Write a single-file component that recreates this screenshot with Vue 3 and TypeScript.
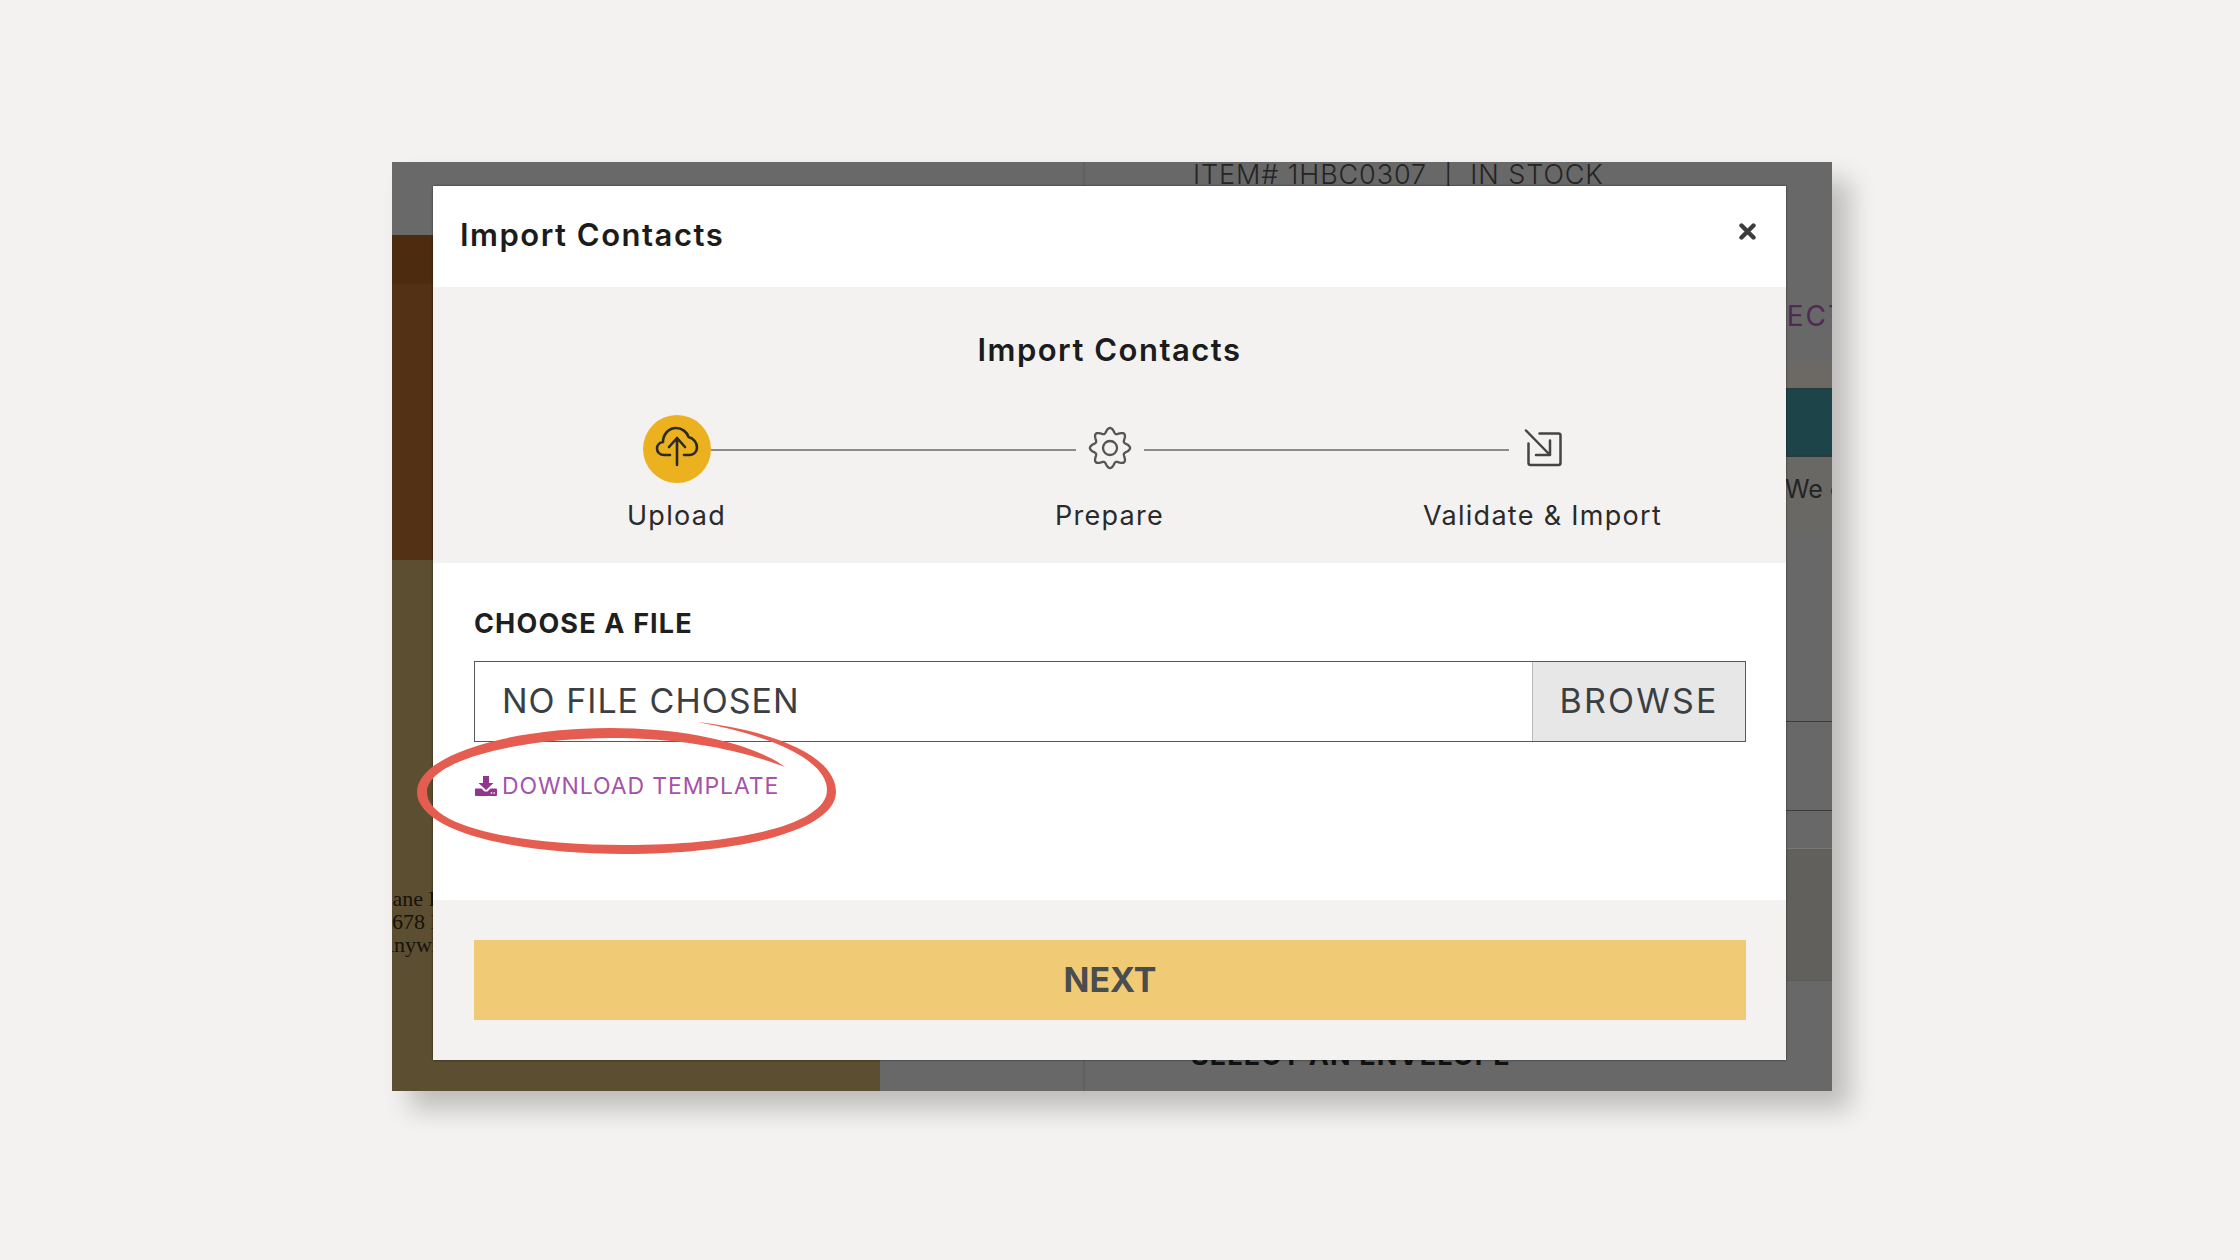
<template>
  <div class="page">
    <div class="stage">
      <div class="bg-left">
        <div class="bl-gray" />
        <div class="bl-dark" />
        <div class="bl-brown" />
        <div class="bl-olive">
          <span class="addr addr-a">Jane Doe</span>
          <span class="addr addr-b">5678 Main St</span>
          <span class="addr addr-c">Anywhere</span>
        </div>
      </div>
      <div class="bg-mid" />
      <div class="bg-right">
        <div class="br-top">
          <div class="item-line">ITEM# 1HBC0307 &nbsp;|&nbsp; IN STOCK</div>
          <div class="select-line">SELECT</div>
        </div>
        <div class="br-tint" />
        <div class="br-teal" />
        <div class="br-note">We can</div>
        <div class="br-plain" />
        <div class="br-line" />
        <div class="br-line br-short" />
        <div class="br-shade" />
        <div class="br-end">SELECT AN ENVELOPE</div>
      </div>

      <div class="modal">
        <header class="modal-head">
          <h2 class="modal-title">Import Contacts</h2>
          <svg class="close" width="17" height="17" viewBox="0 0 17 17">
            <path d="M2.5 2.5l12 12M14.5 2.5l-12 12" fill="none" stroke="#3d3d3d" stroke-width="4.4" stroke-linecap="round" />
          </svg>
        </header>

        <section class="steps">
          <h3 class="steps-title">Import Contacts</h3>
          <div class="track">
            <span class="step-icon is-active">
              <svg width="68" height="68" viewBox="0 0 68 68" fill="none" stroke="#2b2a25" stroke-width="2.6" stroke-linecap="round" stroke-linejoin="round">
                <path d="M27 40h-6c-4 0-7-2.900-7-6.500 0-3.400 2.500-6 6-6.500 0-8 6-14 13-14 6 0 11 4 12.500 9 4.800 1 8.500 5.500 8.500 10.500 0 4.400-3.500 7.500-7 7.500h-6" />
                <path d="M34 50V23M26 32l8-9 8 9" />
              </svg>
            </span>
            <span class="track-line" />
            <span class="step-icon">
              <svg width="68" height="68" viewBox="0 0 68 68" fill="none" stroke="#555" stroke-width="2.3" stroke-linejoin="round">
                <path :d="gearPath" />
                <circle cx="34" cy="33" r="7" />
              </svg>
            </span>
            <span class="track-line" />
            <span class="step-icon">
              <svg width="68" height="68" viewBox="0 0 68 68" fill="none" stroke="#444" stroke-width="2.500" stroke-linecap="round" stroke-linejoin="round">
                <path d="M30.500 18.500H49.500a2 2 0 0 1 2 2V48a2 2 0 0 1-2 2H21.500a2 2 0 0 1-2-2V28.500" />
                <path d="M17 15.500L41 40M41 25.500V40H27" />
              </svg>
            </span>
          </div>
          <div class="labels">
            <span v-for="step in steps" :key="step" class="label">{{ step }}</span>
          </div>
        </section>

        <section class="file">
          <div class="file-title">CHOOSE A FILE</div>
          <div class="file-box">
            <span class="file-name">NO FILE CHOSEN</span>
            <span class="file-browse">BROWSE</span>
          </div>
          <a class="template">
            <svg width="22" height="20" viewBox="0 0 22 20">
              <path d="M8 0h6v7h4.500L11 14 3.500 7H8z" fill="#93358f" />
              <path d="M0 13.500a1 1 0 0 1 1-1h5.500l3 3h3l3-3H21a1 1 0 0 1 1 1V19a1 1 0 0 1-1 1H1a1 1 0 0 1-1-1z" fill="#93358f" />
              <circle cx="16.500" cy="17" r=".9" fill="#e7cfe6" />
              <circle cx="19.200" cy="17" r=".9" fill="#e7cfe6" />
            </svg>
            <span>DOWNLOAD TEMPLATE</span>
          </a>
        </section>

        <footer class="modal-foot">
          <button type="button" class="next">NEXT</button>
        </footer>
      </div>
    </div>

    <svg class="ring" width="2240" height="1260" viewBox="0 0 2240 1260">
      <path
        fill="#e55c50"
        d="M697 722C770 730 836 755 836 792C836 830 740 854 625 854C510 854 417 830 417 792C417 755 510 728 610 728C690 728 755 745 785 767C745 752 690 738 612 738C520 738 427 760 427 792C427 825 510 845 625 845C735 845 827 825 827 790C827 760 770 735 697 722Z"
      />
    </svg>
  </div>
</template>

<script setup lang="ts">
const steps = ['Upload', 'Prepare', 'Validate & Import']

// gear outline: a wavy circle with 8 teeth, one pointing straight up
const buildGear = (cx: number, cy: number) => {
  const pts: string[] = []
  for (let i = 0; i < 128; i++) {
    const a = (i / 128) * Math.PI * 2
    const r = 17.6 + 2.5 * Math.cos(8 * a)
    const x = cx + r * Math.sin(a)
    const y = cy - r * Math.cos(a)
    pts.push(`${x.toFixed(2)} ${y.toFixed(2)}`)
  }
  return `M${pts.join('L')}Z`
}

const gearPath = buildGear(34, 33)
</script>

<style>
html,
body {
  margin: 0;
  background: #f3f2f0;
}
</style>

<style scoped>
.page {
  position: relative;
  box-sizing: border-box;
  width: 2240px;
  height: 1260px;
  padding: 162px 0 0 392px;
  background: #f3f2f0;
  overflow: hidden;
  font-family: Inter, "Liberation Sans", sans-serif;
}

.stage {
  position: relative;
  display: flex;
  width: 1440px;
  height: 929px;
  overflow: visible;
  background: #686868;
  box-shadow: 18px 18px 24px rgba(0, 0, 0, 0.22);
}

.bg-left {
  width: 488px;
  display: flex;
  flex-direction: column;
  overflow: hidden;
}

.bl-gray {
  height: 73px;
  background: #696969;
}

.bl-dark {
  height: 49px;
  background: #4c2b0e;
}

.bl-brown {
  height: 276px;
  background: #523114;
}

.bl-olive {
  flex: 1;
  display: flex;
  flex-direction: column;
  padding-top: 327px;
  background: #5c4e30;
  font-family: "Liberation Serif", serif;
  font-size: 22px;
  line-height: 23px;
  color: #15120c;
}

.addr-a {
  margin-left: -8px;
}

.addr-b {
  margin-left: -11px;
}

.addr-c {
  margin-left: -14px;
}

.bg-mid {
  width: 205px;
  background: #686868;
  border-right: 2px solid #606060;
  box-sizing: border-box;
}

.bg-right {
  flex: 1;
  min-width: 0;
  display: flex;
  flex-direction: column;
  overflow: hidden;
  color: #242424;
}

.br-top {
  height: 199px;
}

.item-line {
  padding-left: 108px;
  font-size: 27px;
  font-weight: 300;
  line-height: 26px;
  letter-spacing: 0.9px;
  white-space: nowrap;
}

.select-line {
  margin-top: 112px;
  padding-left: 645px;
  font-size: 28px;
  line-height: 32px;
  letter-spacing: 2px;
  color: #4e2a55;
  white-space: nowrap;
}

.br-tint {
  height: 27px;
  background: #6c6965;
}

.br-teal {
  box-sizing: border-box;
  height: 69px;
  background: #1c4449;
  border-top: 2px solid #2d3a3c;
  border-bottom: 2px solid #2d3a3c;
}

.br-note {
  height: 75px;
  padding: 16px 0 0 700px;
  box-sizing: border-box;
  background: #6a6865;
  font-size: 25px;
  line-height: 32px;
  white-space: nowrap;
}

.br-plain {
  height: 189px;
}

.br-line {
  box-sizing: border-box;
  height: 89px;
  border-top: 1px solid #3c3c3c;
}

.br-short {
  height: 38px;
}

.br-shade {
  height: 132px;
  background: #62605c;
  border-top: 1px solid #777;
  box-sizing: border-box;
}

.br-end {
  box-sizing: border-box;
  height: 111px;
  padding: 60px 0 0 106px;
  border-top: 1px solid #5a5a5a;
  font-size: 27px;
  font-weight: 700;
  line-height: 30px;
  letter-spacing: 1.1px;
  color: #111;
  white-space: nowrap;
}

.modal {
  position: absolute;
  left: 41px;
  top: 24px;
  width: 1353px;
  height: 874px;
  display: flex;
  flex-direction: column;
  background: #fff;
  box-shadow: 0 0 2px rgba(0, 0, 0, 0.6);
}

.modal-head {
  height: 101px;
  flex: none;
  box-sizing: border-box;
  display: flex;
  align-items: center;
  justify-content: space-between;
  padding: 0 30px 4px 27px;
}

.modal-title,
.steps-title {
  margin: 0;
  font-size: 31px;
  font-weight: 600;
  line-height: 36px;
  letter-spacing: 1.5px;
  color: #1c1c1c;
}

.close {
  margin-top: -6px;
}

.steps {
  height: 276px;
  flex: none;
  box-sizing: border-box;
  padding-top: 45px;
  background: #f3f2f0;
}

.steps-title {
  text-align: center;
}

.track {
  display: flex;
  align-items: center;
  margin-top: 47px;
  padding: 0 209px 0 210px;
}

.step-icon {
  width: 68px;
  height: 68px;
  flex: none;
  display: flex;
}

.step-icon.is-active {
  border-radius: 50%;
  background: #ebb11f;
}

.track-line {
  flex: 1;
  height: 2px;
  margin-top: 2px;
  background: #8c8b88;
}

.labels {
  display: grid;
  grid-template-columns: repeat(3, 433px);
  margin-top: 17px;
  padding-left: 27px;
}

.label {
  text-align: center;
  font-size: 27px;
  line-height: 32px;
  letter-spacing: 1.3px;
  color: #2a2a2a;
}

.file {
  flex: 1;
  box-sizing: border-box;
  padding: 44px 40px 0 41px;
}

.file-title {
  font-size: 27px;
  font-weight: 700;
  line-height: 34px;
  letter-spacing: 1.15px;
  color: #1f1f1f;
}

.file-box {
  display: flex;
  height: 81px;
  margin-top: 20px;
  box-sizing: border-box;
  border: 1px solid #55585c;
  font-size: 34px;
  letter-spacing: 1px;
  color: #3b3f44;
}

.file-name {
  flex: 1;
  display: flex;
  align-items: center;
  padding: 0 0 3px 27px;
}

.file-browse {
  width: 213px;
  display: flex;
  align-items: center;
  justify-content: center;
  padding-bottom: 3px;
  box-sizing: border-box;
  background: #e7e7e7;
  border-left: 1px solid #b9b9b9;
  letter-spacing: 2.2px;
}

.template {
  display: flex;
  align-items: center;
  gap: 5px;
  margin-top: 32px;
  padding-left: 1px;
  font-size: 23px;
  line-height: 24px;
  letter-spacing: 0.9px;
  color: #a552aa;
}

.modal-foot {
  height: 160px;
  flex: none;
  box-sizing: border-box;
  padding: 40px 40px 40px 41px;
  background: #f3f2f0;
}

.next {
  display: block;
  width: 100%;
  height: 80px;
  padding: 0 0 2px;
  border: 0;
  border-radius: 0;
  background: #f1ca75;
  font-family: inherit;
  font-size: 34px;
  font-weight: 700;
  color: #4a4d4f;
}

.ring {
  position: absolute;
  left: 0;
  top: 0;
  pointer-events: none;
}
</style>
